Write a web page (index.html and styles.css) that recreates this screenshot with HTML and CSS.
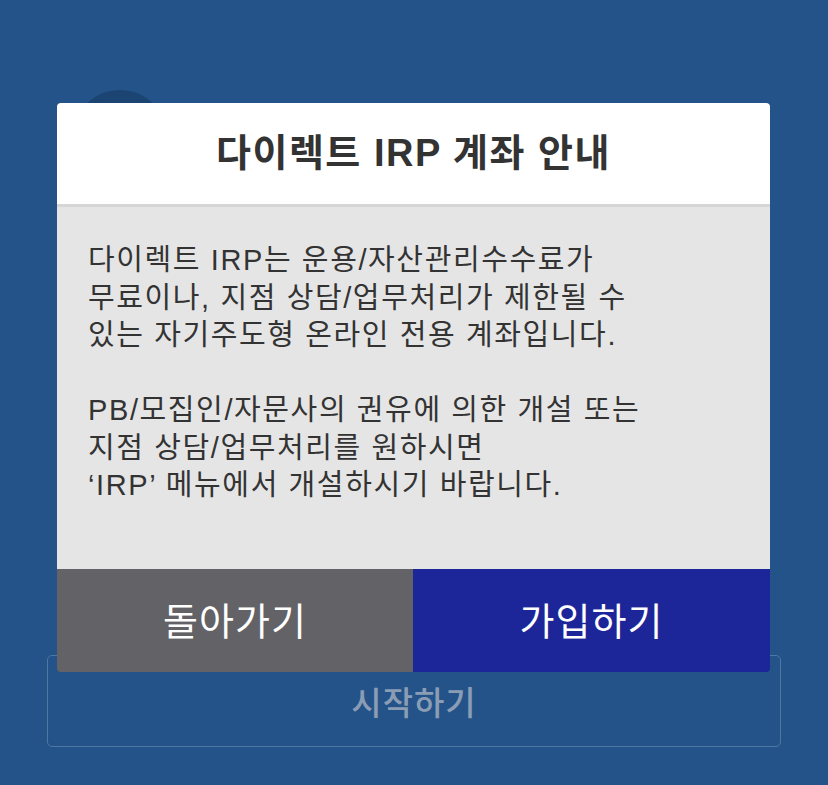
FILE: index.html
```html
<!DOCTYPE html>
<html lang="ko">
<head>
<meta charset="utf-8">
<title>다이렉트 IRP 계좌 안내</title>
<link rel="stylesheet" href="styles.css">
</head>
<body>
<div class="screen">
  <div class="avatar"></div>
  <div class="spacer"></div>
  <button class="start-btn" type="button">시작하기</button>
</div>

<div class="modal" role="dialog" aria-labelledby="modal-title">
  <div class="modal-head">
    <h1 id="modal-title" class="modal-title">다이렉트 IRP 계좌 안내</h1>
  </div>
  <div class="modal-body">
    <p class="modal-text">다이렉트 IRP는 운용/자산관리수수료가<br>무료이나, 지점 상담/업무처리가 제한될 수<br>있는 자기주도형 온라인 전용 계좌입니다.</p>
    <p class="modal-text">PB/모집인/자문사의 권유에 의한 개설 또는<br>지점 상담/업무처리를 원하시면<br>‘IRP’ 메뉴에서 개설하시기 바랍니다.</p>
  </div>
  <div class="modal-actions">
    <button class="action action-back" type="button">돌아가기</button>
    <button class="action action-join" type="button">가입하기</button>
  </div>
</div>
</body>
</html>
```

FILE: styles.css
```css
* {
  box-sizing: border-box;
}

html, body {
  margin: 0;
  height: 100%;
}

body {
  background: #245389;
  /* Latin glyphs from an Arial-metric face, Hangul from Noto CJK */
  font-family: "Liberation Sans", "Noto Sans CJK KR", sans-serif;
  overflow: hidden;
}

/* page underneath the dialog */
.screen {
  display: flex;
  flex-direction: column;
  align-items: flex-start;
  padding: 90px 47px 0;
  height: 100%;
}

.avatar {
  width: 94px;
  height: 94px;
  margin-left: 26px;
  border-radius: 50%;
  background: #1b4472;
}

.spacer {
  height: 471px;
}

.start-btn {
  width: 734px;
  height: 92px;
  border: 1.5px solid #4f77a3;
  border-radius: 5px;
  background: transparent;
  color: #8b9db4;
  font-family: inherit;
  font-size: 33px;
  font-weight: 500;
  letter-spacing: 1px;
  padding: 0;
}

/* dialog */
.modal {
  position: absolute;
  top: 103px;
  left: 57px;
  width: 713px;
  border-radius: 4px;
  overflow: hidden;
  display: flex;
  flex-direction: column;
}

.modal-head {
  background: #ffffff;
  height: 104px;
  border-bottom: 3px solid #d6d6d6;
  display: flex;
  align-items: center;
  justify-content: center;
}

.modal-title {
  margin: 0;
  color: #333333;
  font-size: 38px;
  font-weight: 700;
  letter-spacing: 1.5px;
  line-height: 1.2;
}

.modal-body {
  background: #e5e5e5;
  height: 362px;
  padding: 35px 31px 0;
}

.modal-text {
  margin: 0 0 37.5px;
  color: #333333;
  font-size: 29px;
  line-height: 37.5px;
  letter-spacing: 1.6px;
}

.modal-actions {
  display: flex;
  height: 103px;
}

.action {
  flex: 0 0 auto;
  border: 0;
  padding: 0 0 4px;
  color: #ffffff;
  font-family: inherit;
  font-size: 38px;
  font-weight: 400;
  letter-spacing: 1px;
}

.action-back {
  width: 356px;
  background: #636266;
}

.action-join {
  width: 357px;
  background: #1c2699;
}
```
